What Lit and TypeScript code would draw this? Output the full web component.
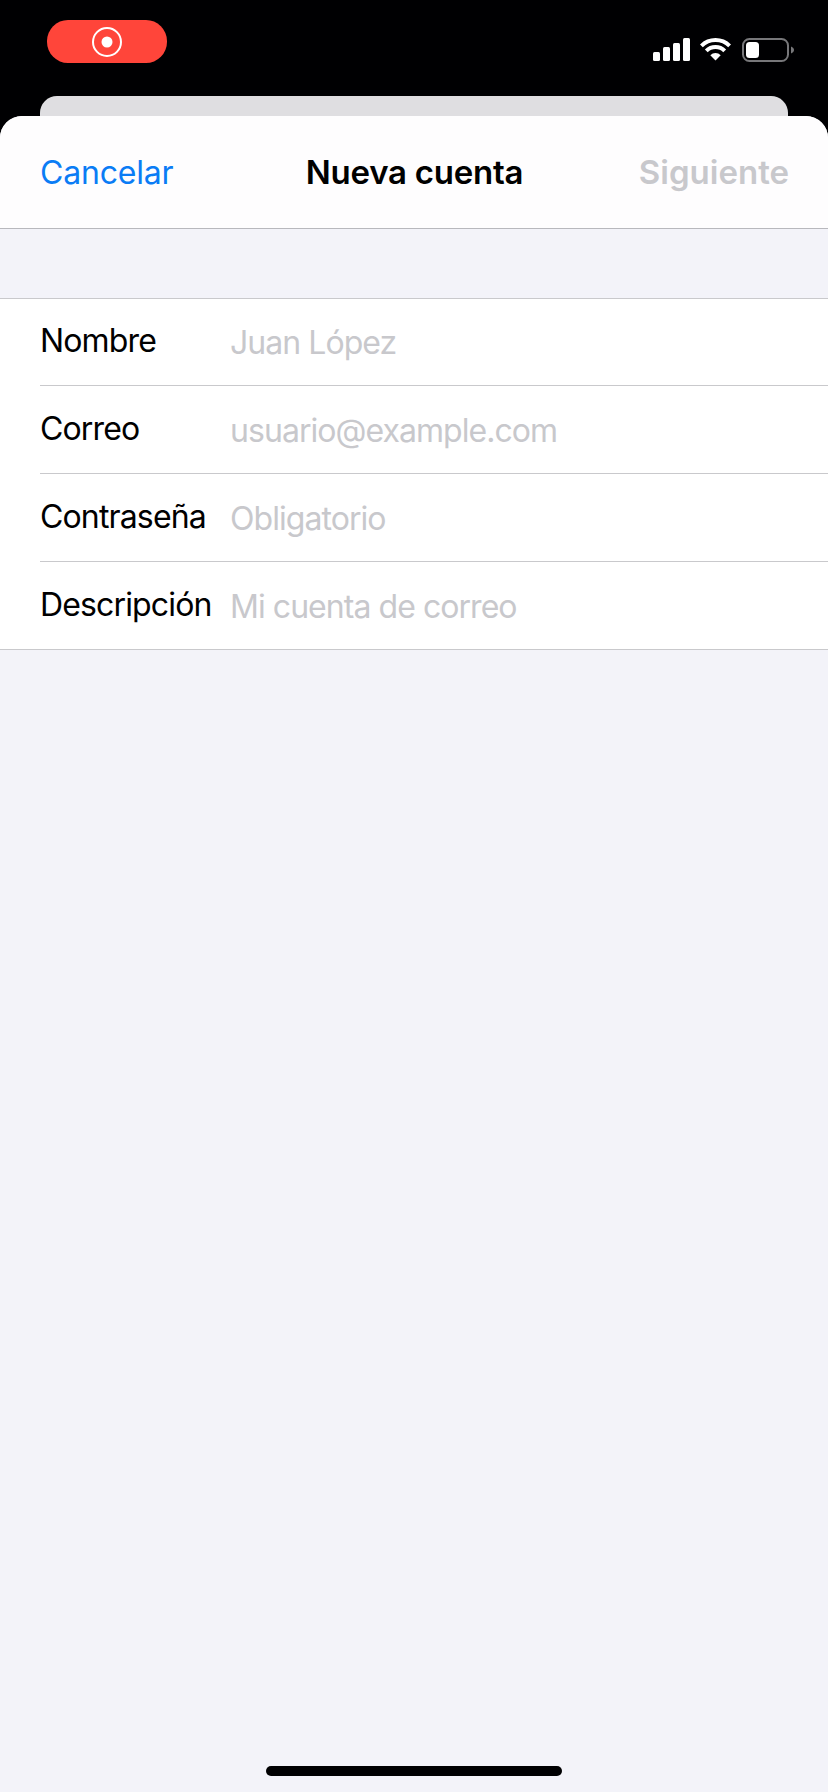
import { LitElement, css, html } from 'lit';
import { customElement } from 'lit/decorators.js';

const fields = [
  { label: 'Nombre', hint: 'Juan López' },
  { label: 'Correo', hint: 'usuario@example.com' },
  { label: 'Contraseña', hint: 'Obligatorio' },
  { label: 'Descripción', hint: 'Mi cuenta de correo' },
];

@customElement('app-root')
export class AppRoot extends LitElement {
  static styles = css`
    :host {
      display: flex;
      flex-direction: column;
      height: 1792px;
      background: #000002;
      font-family: Inter, "Liberation Sans", sans-serif;
      font-size: 32px;
      color: #000;
      overflow: hidden;
    }

    .status {
      display: flex;
      justify-content: space-between;
      height: 96px;
      box-sizing: border-box;
      padding: 20px 34px 0 47px;
    }

    .recording {
      display: flex;
      align-items: center;
      justify-content: center;
      width: 120px;
      height: 43px;
      border-radius: 21px;
      background: #ff453a;
    }

    .indicators {
      display: flex;
      align-items: flex-start;
      padding-top: 18px;
    }

    .signal { margin-right: 10px; }
    .wifi { margin-right: 11px; }

    .back-card {
      height: 20px;
      margin: 0 40px;
      border-radius: 17px 17px 0 0;
      background: #dfdee1;
    }

    .sheet {
      flex: 1;
      display: flex;
      flex-direction: column;
      border-radius: 22px 22px 0 0;
      background: #f3f3f9;
      overflow: hidden;
    }

    .nav {
      display: grid;
      grid-template-columns: 1fr auto 1fr;
      align-items: center;
      height: 113px;
      box-sizing: border-box;
      padding: 0 39px 0 40px;
      background: #fefdfe;
      border-bottom: 1px solid #b8b8bd;
    }

    .cancel { color: #0a7cf5; letter-spacing: -0.2px; }
    .title { font-size: 33px; font-weight: 600; letter-spacing: -0.25px; }
    .next { justify-self: end; font-size: 33px; font-weight: 600; color: #c8c8cc; }

    .form {
      margin-top: 69px;
      background: #fff;
      border-top: 1px solid #c9c9cc;
      border-bottom: 1px solid #c9c9cc;
      letter-spacing: -0.85px;
    }

    .row {
      display: flex;
      align-items: center;
      height: 87px;
      margin-left: 40px;
    }

    .row:first-child { height: 86px; }
    .row + .row { border-top: 1px solid #c9c9cc; }

    .label {
      width: 190px;
      flex: none;
      padding-bottom: 3px;
    }

    .hint {
      padding-top: 1px;
      color: #c8c8cc;
      letter-spacing: -0.95px;
    }

    .home {
      align-self: center;
      width: 296px;
      height: 10px;
      margin: auto 0 16px;
      border-radius: 5px;
      background: #000002;
    }
  `;

  render() {
    return html`
      <div class="status">
        <div class="recording">
          <svg width="32" height="32" viewBox="0 0 32 32">
            <circle cx="16" cy="16" r="14" fill="none" stroke="#fff" stroke-width="2" />
            <circle cx="16" cy="16" r="5.5" fill="#fff" />
          </svg>
        </div>
        <div class="indicators">
          <svg class="signal" width="37" height="23" viewBox="0 0 37 23" fill="#fff">
            <rect x="0" y="14" width="7" height="9" rx="1.5" />
            <rect x="10" y="9" width="7" height="14" rx="1.5" />
            <rect x="20" y="5" width="7" height="18" rx="1.5" />
            <rect x="30" y="0" width="7" height="23" rx="1.5" />
          </svg>
          <svg class="wifi" width="31" height="23" viewBox="0 0 31 23">
            <path d="M1.4 7.9A20 20 0 0 1 29.6 7.9" fill="none" stroke="#fff" stroke-width="4" />
            <path d="M6.3 12.8A13 13 0 0 1 24.7 12.8" fill="none" stroke="#fff" stroke-width="4" />
            <path d="M15.5 22.5L10.3 17.2A7.4 7.4 0 0 1 20.7 17.2Z" fill="#fff" />
          </svg>
          <svg width="52" height="24" viewBox="0 0 52 24">
            <rect x="1" y="1" width="45" height="22" rx="6.5" fill="none" stroke="#77777a" stroke-width="2" />
            <rect x="4" y="4" width="13" height="16" rx="3.5" fill="#fff" />
            <path d="M49 8.5C51 9.5 52 10.5 52 12C52 13.5 51 14.5 49 15.5Z" fill="#77777a" />
          </svg>
        </div>
      </div>
      <div class="back-card"></div>
      <div class="sheet">
        <div class="nav">
          <span class="cancel">Cancelar</span>
          <span class="title">Nueva cuenta</span>
          <span class="next">Siguiente</span>
        </div>
        <div class="form">
          ${fields.map(
            (f) => html`
              <div class="row">
                <span class="label">${f.label}</span>
                <span class="hint">${f.hint}</span>
              </div>
            `
          )}
        </div>
        <div class="home"></div>
      </div>
    `;
  }
}
